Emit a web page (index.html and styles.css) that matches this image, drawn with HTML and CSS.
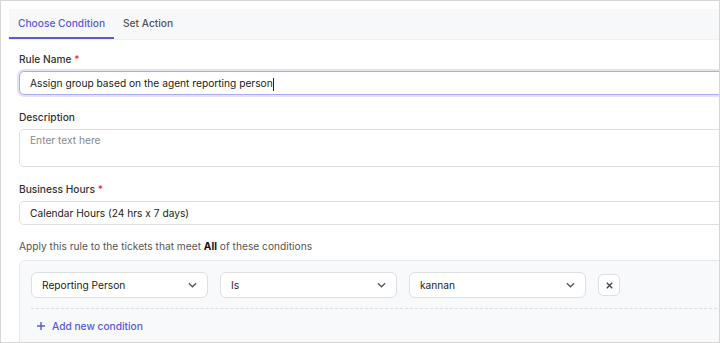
FILE: index.html
```html
<!DOCTYPE html>
<html lang="en">

<head>
    <meta charset="UTF-8">
    <meta name="viewport" content="width=device-width, initial-scale=1.0">
    <title>Rule</title>
    <link rel="stylesheet" href="styles.css">
</head>

<body>
    <div class="frame">
        <div class="panel">
            <div class="tabs">
                <div class="tab active">Choose Condition</div>
                <div class="tab">Set Action</div>
            </div>

            <div class="form">
                <label class="label">Rule Name <span class="req">*</span></label>
                <div class="field focused">Assign group based on the agent reporting person<span class="caret"></span></div>

                <label class="label">Description</label>
                <div class="field area placeholder">Enter text here</div>

                <label class="label">Business Hours <span class="req">*</span></label>
                <div class="field">Calendar Hours (24 hrs x 7 days)</div>

                <p class="apply">Apply this rule to the tickets that meet <b>All</b> of these conditions</p>

                <div class="conditions">
                    <div class="cond-row">
                        <div class="select">Reporting Person
                            <svg viewBox="0 0 10 6"><path d="M1 1l4 4 4-4" /></svg>
                        </div>
                        <div class="select">Is
                            <svg viewBox="0 0 10 6"><path d="M1 1l4 4 4-4" /></svg>
                        </div>
                        <div class="select">kannan
                            <svg viewBox="0 0 10 6"><path d="M1 1l4 4 4-4" /></svg>
                        </div>
                        <button class="remove">
                            <svg viewBox="0 0 10 10"><path d="M2 2l6 6M8 2l-6 6" /></svg>
                        </button>
                    </div>
                    <div class="add">
                        <svg viewBox="0 0 10 10"><path d="M5 1v8M1 5h8" /></svg>
                        Add new condition
                    </div>
                </div>
            </div>
        </div>
    </div>
</body>

</html>
```

FILE: styles.css
```css
* {
    margin: 0;
    padding: 0;
    box-sizing: border-box;
}

body {
    font-family: Inter, "Noto Sans", sans-serif;
    background-color: #fff;
    color: #222;
}

.frame {
    width: 720px;
    height: 343px;
    border: 1px solid #d6d6d6;
    padding: 8px 0 0 8px;
    overflow: hidden;
}

.panel {
    width: 780px;
}

.tabs {
    display: flex;
    height: 31px;
    background-color: #f7f8fa;
    border-bottom: 1px solid #eef0f3;
}

.tab {
    font-size: 10.2px;
    font-weight: 500;
    color: #555;
    padding: 0 9px;
    line-height: 29px;
    border-bottom: 2px solid transparent;
}

.tab.active {
    color: #5a5ad8;
    border-bottom-color: #5a5ad8;
}

.form {
    padding: 12px 0 0 10px;
    display: flex;
    flex-direction: column;
}

.label {
    font-size: 10.2px;
    font-weight: 500;
    color: #333;
    line-height: 14px;
    margin-bottom: 5px;
}

.req {
    color: #e0393e;
}

.field {
    height: 24px;
    border: 1px solid #dcdfe4;
    border-radius: 5px;
    font-size: 10.2px;
    color: #222;
    padding: 0 10px;
    line-height: 22px;
    margin-bottom: 15px;
    background-color: #fff;
}

.field.focused {
    border-color: #a9abf2;
    box-shadow: 0 0 0 2px #e2e3fc;
}

.caret {
    display: inline-block;
    width: 1px;
    height: 13px;
    background-color: #222;
    vertical-align: middle;
}

.field.area {
    height: 38px;
    line-height: 20px;
}

.placeholder {
    color: #888;
}

.apply {
    font-size: 10.2px;
    color: #555;
    margin-top: -1px;
    line-height: 14px;
    margin-bottom: 7px;
}

.apply b {
    color: #111;
}

.conditions {
    background-color: #f8f9fb;
    border: 1px solid #e6e8ec;
    border-radius: 6px;
    padding: 11px 11px 0;
    height: 100px;
}

.cond-row {
    display: flex;
    align-items: center;
    gap: 12px;
    padding-bottom: 10px;
    border-bottom: 1px dashed #d9dce1;
}

.select {
    width: 177px;
    height: 26px;
    border: 1px solid #dcdfe4;
    border-radius: 6px;
    background-color: #fff;
    font-size: 10.2px;
    color: #222;
    display: flex;
    align-items: center;
    justify-content: space-between;
    padding: 0 10px;
}

.select svg {
    width: 9px;
    height: 6px;
    fill: none;
    stroke: #555;
    stroke-width: 1.4;
}

.remove {
    width: 22px;
    height: 22px;
    border: 1px solid #dcdfe4;
    border-radius: 5px;
    background-color: #fff;
    display: flex;
    align-items: center;
    justify-content: center;
}

.remove svg {
    width: 9px;
    height: 9px;
    fill: none;
    stroke: #444;
    stroke-width: 1.5;
}

.add {
    display: flex;
    align-items: center;
    gap: 6px;
    font-size: 10.2px;
    font-weight: 500;
    color: #5a5ad8;
    padding: 11px 0 0 5px;
}

.add svg {
    width: 10px;
    height: 10px;
    fill: none;
    stroke: #5a5ad8;
    stroke-width: 1.4;
}
```
